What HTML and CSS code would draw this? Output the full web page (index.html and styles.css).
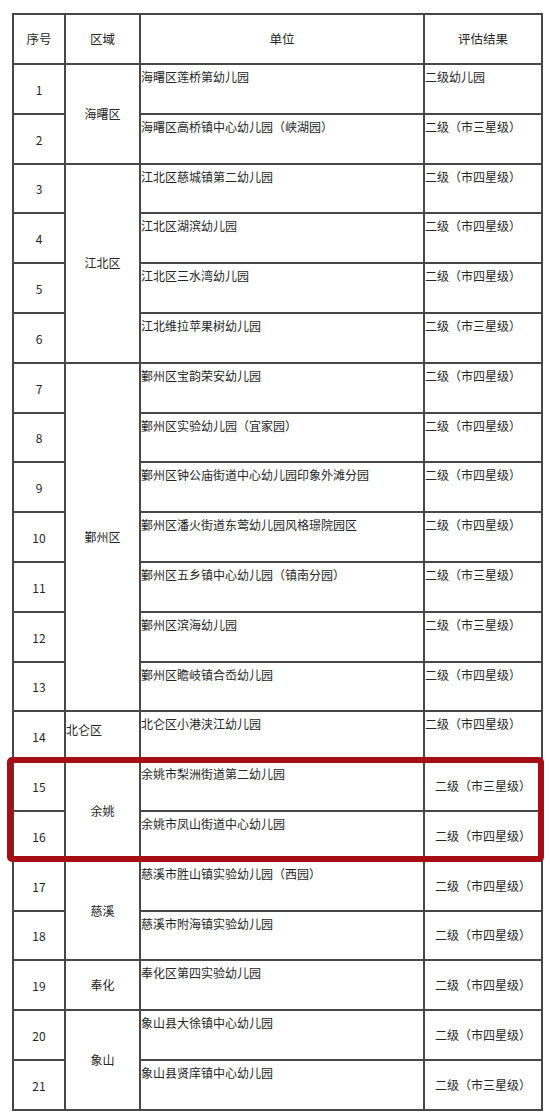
FILE: index.html
```html
<!DOCTYPE html>
<html lang="zh-CN">
<head>
<meta charset="utf-8">
<title>评估结果</title>
<link rel="stylesheet" href="styles.css">
</head>
<body>
<div class="wrap">
<table class="grid">
<colgroup>
<col class="c-no"><col class="c-area"><col class="c-unit"><col class="c-res">
</colgroup>
<thead>
<tr class="head"><th>序号</th><th>区域</th><th>单位</th><th>评估结果</th></tr>
</thead>
<tbody>
<tr><td class="no">1</td><td class="area" rowspan="2">海曙区</td><td class="unit">海曙区莲桥第幼儿园</td><td class="res">二级幼儿园</td></tr>
<tr><td class="no">2</td><td class="unit">海曙区高桥镇中心幼儿园（峡湖园）</td><td class="res">二级（市三星级）</td></tr>
<tr><td class="no">3</td><td class="area" rowspan="4">江北区</td><td class="unit">江北区慈城镇第二幼儿园</td><td class="res">二级（市四星级）</td></tr>
<tr><td class="no">4</td><td class="unit">江北区湖滨幼儿园</td><td class="res">二级（市四星级）</td></tr>
<tr><td class="no">5</td><td class="unit">江北区三水湾幼儿园</td><td class="res">二级（市四星级）</td></tr>
<tr><td class="no">6</td><td class="unit">江北维拉苹果树幼儿园</td><td class="res">二级（市三星级）</td></tr>
<tr><td class="no">7</td><td class="area" rowspan="7">鄞州区</td><td class="unit">鄞州区宝韵荣安幼儿园</td><td class="res">二级（市四星级）</td></tr>
<tr><td class="no">8</td><td class="unit">鄞州区实验幼儿园（宜家园）</td><td class="res">二级（市四星级）</td></tr>
<tr><td class="no">9</td><td class="unit">鄞州区钟公庙街道中心幼儿园印象外滩分园</td><td class="res">二级（市四星级）</td></tr>
<tr><td class="no">10</td><td class="unit">鄞州区潘火街道东莺幼儿园风格璟院园区</td><td class="res">二级（市四星级）</td></tr>
<tr><td class="no">11</td><td class="unit">鄞州区五乡镇中心幼儿园（镇南分园）</td><td class="res">二级（市三星级）</td></tr>
<tr><td class="no">12</td><td class="unit">鄞州区滨海幼儿园</td><td class="res">二级（市三星级）</td></tr>
<tr><td class="no">13</td><td class="unit">鄞州区瞻岐镇合岙幼儿园</td><td class="res">二级（市四星级）</td></tr>
<tr><td class="no">14</td><td class="area area-left">北仑区</td><td class="unit">北仑区小港浃江幼儿园</td><td class="res">二级（市四星级）</td></tr>
<tr><td class="no">15</td><td class="area" rowspan="2">余姚</td><td class="unit">余姚市梨洲街道第二幼儿园</td><td class="res res-c">二级（市三星级）</td></tr>
<tr><td class="no">16</td><td class="unit">余姚市凤山街道中心幼儿园</td><td class="res res-c">二级（市四星级）</td></tr>
<tr><td class="no">17</td><td class="area" rowspan="2">慈溪</td><td class="unit">慈溪市胜山镇实验幼儿园（西园）</td><td class="res res-c">二级（市四星级）</td></tr>
<tr><td class="no">18</td><td class="unit">慈溪市附海镇实验幼儿园</td><td class="res res-c">二级（市四星级）</td></tr>
<tr><td class="no">19</td><td class="area">奉化</td><td class="unit">奉化区第四实验幼儿园</td><td class="res res-c">二级（市四星级）</td></tr>
<tr><td class="no">20</td><td class="area" rowspan="2">象山</td><td class="unit">象山县大徐镇中心幼儿园</td><td class="res res-c">二级（市四星级）</td></tr>
<tr><td class="no">21</td><td class="unit">象山县贤庠镇中心幼儿园</td><td class="res res-c">二级（市三星级）</td></tr>
</tbody>
</table>
<div class="highlight"></div>
</div>
</body>
</html>
```
FILE: styles.css
```css
html, body {
  margin: 0;
  padding: 0;
  background: #ffffff;
}
body {
  font-family: "Noto Sans CJK SC", "Noto Sans", sans-serif;
  font-size: 12px;
  color: #262626;
}
.wrap {
  position: relative;
  padding: 13px 0 0 12px;
}
.grid {
  border-collapse: collapse;
  table-layout: fixed;
  width: 529px;
}
.c-no { width: 52px; }
.c-area { width: 75px; }
.c-unit { width: 284px; }
.c-res { width: 118px; }
.grid th, .grid td {
  border: 2px solid #474747;
  padding: 0;
  line-height: 16px;
}
.grid .head {
  height: 50px;
}
.grid th {
  font-weight: normal;
  font-size: 12.5px;
  text-align: center;
  vertical-align: middle;
}
.grid tbody tr {
  height: 49.8px;
}
.grid .no {
  text-align: center;
  vertical-align: middle;
  padding-top: 2px;
}
.grid .area {
  text-align: center;
  vertical-align: middle;
}
.grid .area-left {
  text-align: left;
  padding-bottom: 12px;
}
.grid .unit {
  text-align: left;
  vertical-align: top;
  padding-top: 4px;
}
.grid .res {
  text-align: left;
  vertical-align: top;
  padding-top: 4px;
}
.grid .res-c {
  text-align: center;
  vertical-align: middle;
  padding-top: 0;
}
.highlight {
  position: absolute;
  left: 7px;
  top: 757px;
  width: 525px;
  height: 93px;
  border: 6px solid #a60d14;
  border-radius: 5px;
}
```
